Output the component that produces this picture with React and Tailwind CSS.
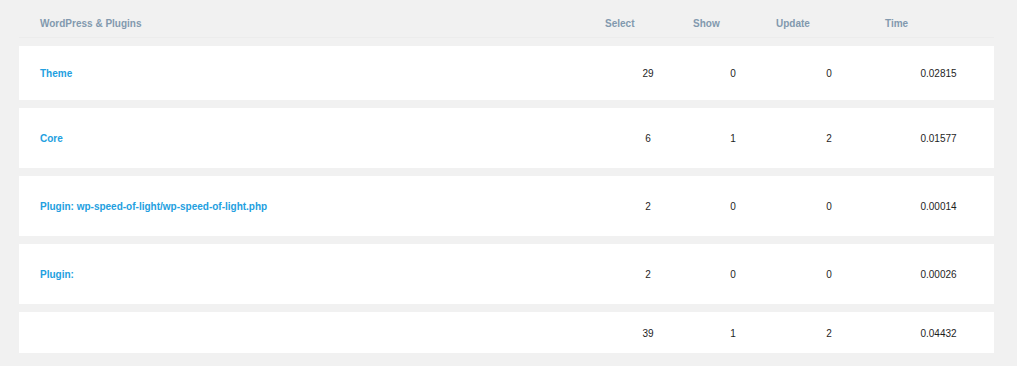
const rows = [
  { name: "Theme", select: 29, show: 0, update: 0, time: "0.02815", h: "h-[54px]" },
  { name: "Core", select: 6, show: 1, update: 2, time: "0.01577", h: "h-[60px]" },
  { name: "Plugin: wp-speed-of-light/wp-speed-of-light.php", select: 2, show: 0, update: 0, time: "0.00014", h: "h-[60px]" },
  { name: "Plugin:", select: 2, show: 0, update: 0, time: "0.00026", h: "h-[60px]" },
];

const App = () => {
  return (
    <div className="min-h-screen bg-[#f1f1f1] pl-[19px] pr-[23px] pb-[13px] font-['Liberation_Sans',Arial,sans-serif] text-[10px] leading-[14px]">
      {/* header */}
      <div className="flex h-[38px] items-start border-b border-[#ececec] pt-[17px] font-bold text-[#8299ae]">
        <div className="flex-1 pl-[21px]">WordPress &amp; Plugins</div>
        <div className="w-[88px]">Select</div>
        <div className="w-[83px]">Show</div>
        <div className="w-[109px]">Update</div>
        <div className="w-[109px]">Time</div>
      </div>

      <div className="mt-[8px] flex flex-col gap-[8px]">
        {rows.map((r) => (
          <div key={r.name} className={`flex items-center bg-white pt-[2px] text-[#1e1e1e] ${r.h}`}>
            <div className="flex-1 pl-[21px] font-bold text-[#23a0e0]">{r.name}</div>
            <div className="w-[86px] text-center">{r.select}</div>
            <div className="w-[84px] text-center">{r.show}</div>
            <div className="w-[108px] text-center">{r.update}</div>
            <div className="w-[111px] text-center">{r.time}</div>
          </div>
        ))}

        {/* totals */}
        <div className="flex h-[41px] items-center bg-white pt-[2px] text-[#1e1e1e]">
          <div className="flex-1" />
          <div className="w-[86px] text-center">39</div>
          <div className="w-[84px] text-center">1</div>
          <div className="w-[108px] text-center">2</div>
          <div className="w-[111px] text-center">0.04432</div>
        </div>
      </div>
    </div>
  );
};

export default App;
